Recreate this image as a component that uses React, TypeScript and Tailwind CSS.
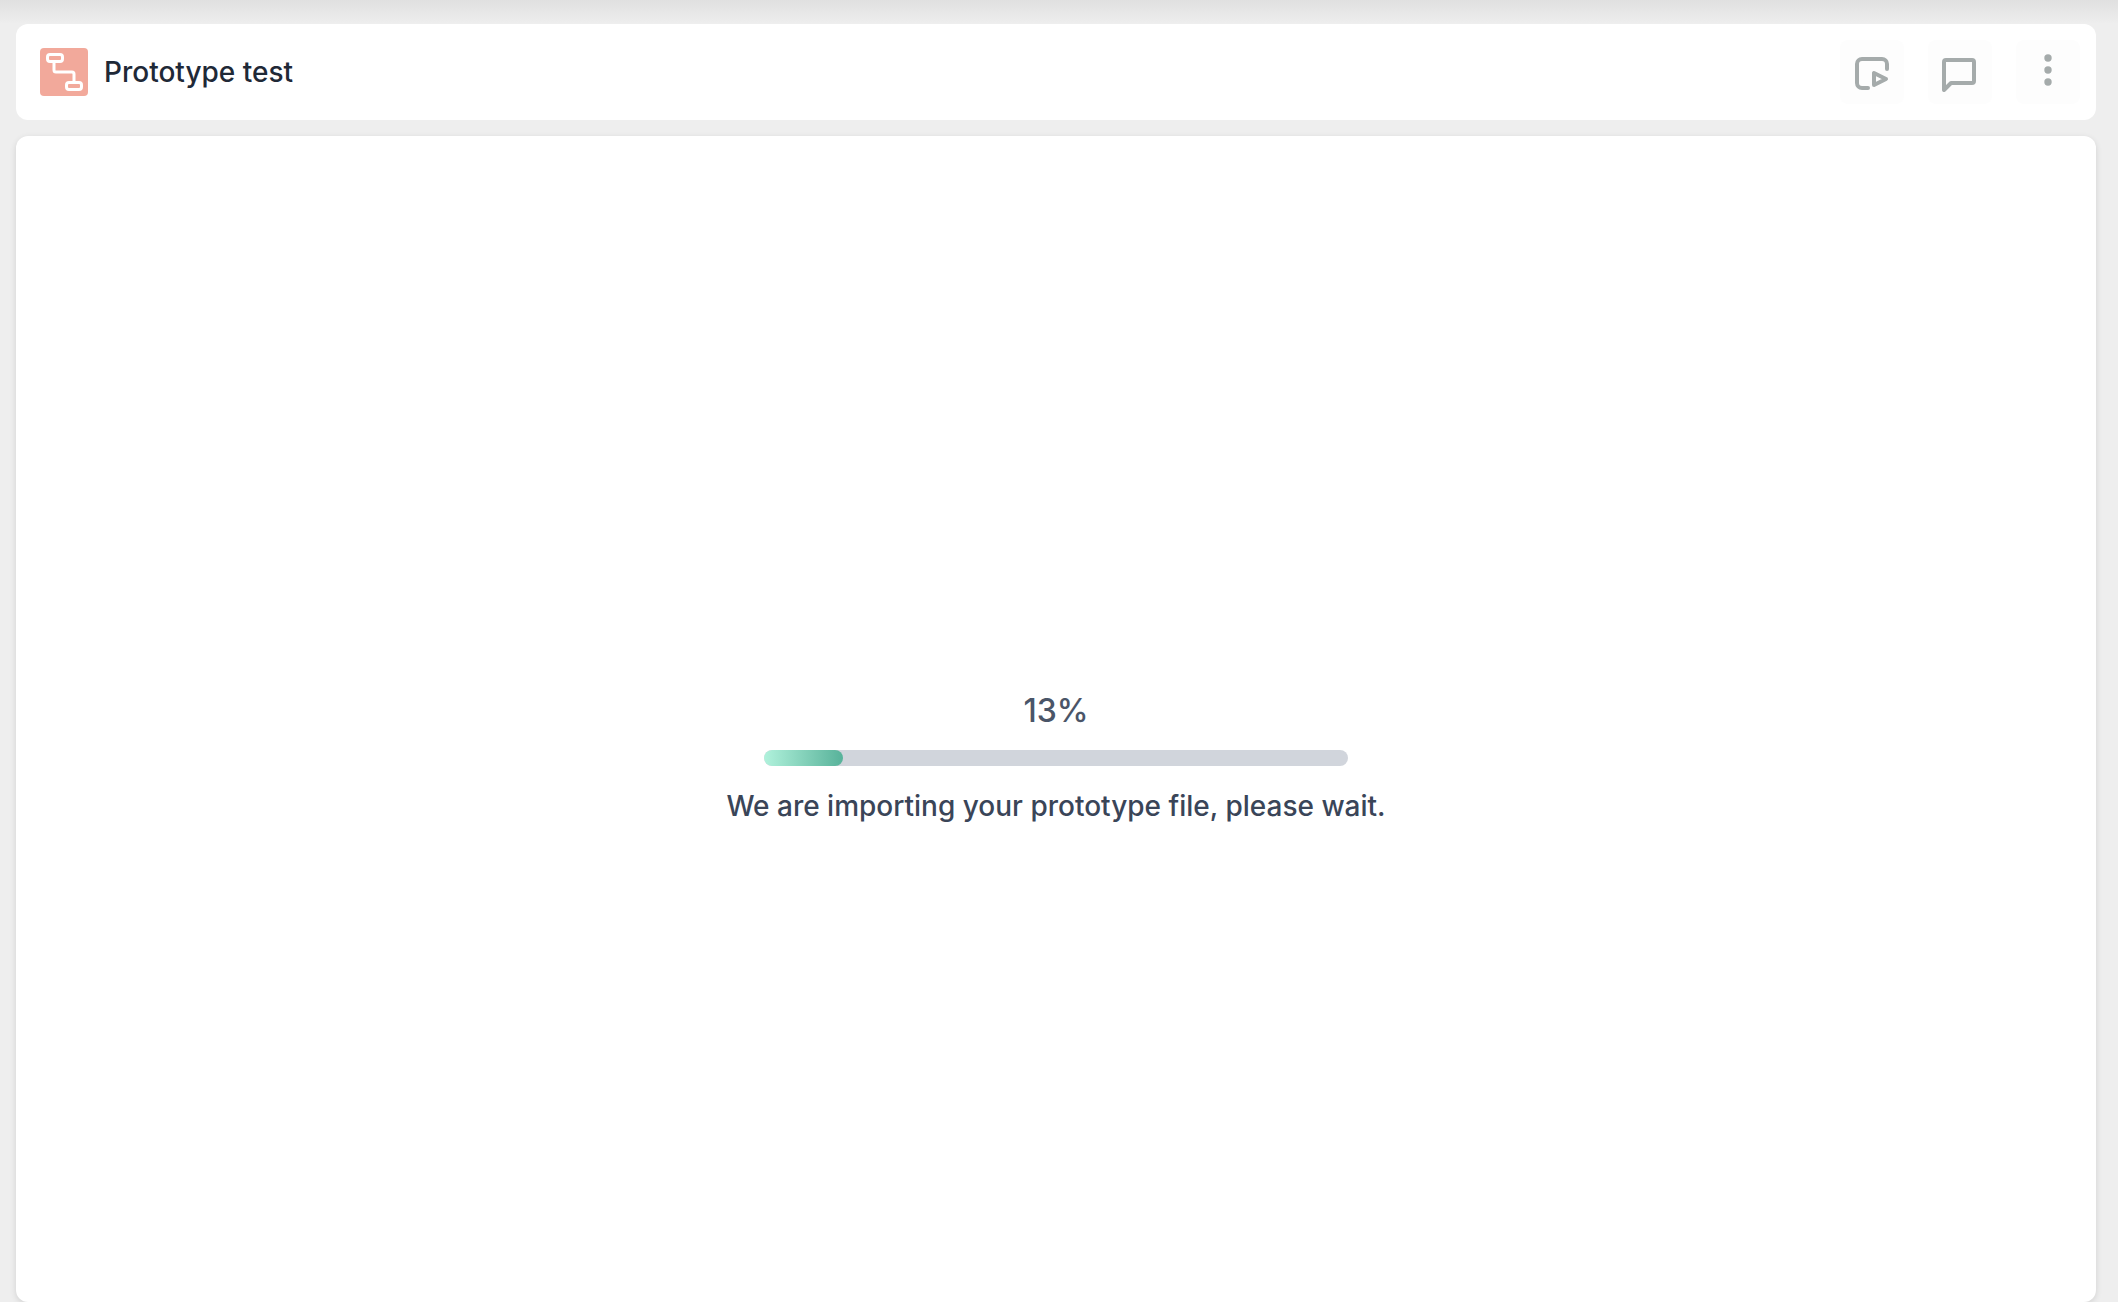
import React from 'react';

const PROGRESS = 13;

// flow diagram glyph on the salmon tile
function FlowIcon() {
  return (
    <svg width="48" height="48" viewBox="0 0 48 48" fill="none" stroke="#fff" strokeWidth="3">
      <rect x="7.5" y="6.5" width="15" height="7" rx="2.5" />
      <rect x="26.5" y="34.5" width="15" height="7" rx="2.5" />
      <path d="M14 14v8a2 2 0 0 0 2 2h16a2 2 0 0 1 2 2v8" strokeLinecap="round" />
    </svg>
  );
}

function PlayIcon() {
  return (
    <svg width="36" height="36" viewBox="0 0 36 36" fill="none" stroke="#a5abab" strokeWidth="4" strokeLinecap="round" strokeLinejoin="round">
      <path d="M14 34H8a5 5 0 0 1-5-5V10a5 5 0 0 1 5-5h20a5 5 0 0 1 5 5v5" />
      <path d="M20 19v12l12-6z" />
    </svg>
  );
}

function CommentIcon() {
  return (
    <svg width="36" height="40" viewBox="0 0 36 40" fill="none" stroke="#a5abab" strokeWidth="4" strokeLinejoin="round">
      <path d="M2 38V10a2 2 0 0 1 2-2h26a2 2 0 0 1 2 2v19a2 2 0 0 1-2 2H9z" />
    </svg>
  );
}

function DotsIcon() {
  return (
    <svg width="8" height="36" viewBox="0 0 8 36" fill="#a5abab">
      <circle cx="4" cy="4" r="3.7" />
      <circle cx="4" cy="16" r="3.7" />
      <circle cx="4" cy="28" r="3.7" />
    </svg>
  );
}

function IconButton({ children }: { children: React.ReactNode }) {
  return (
    <button className="flex h-16 w-16 items-center justify-center rounded-lg bg-[#fdfdfd]">
      {children}
    </button>
  );
}

export default function App() {
  return (
    <div className="h-[1302px] overflow-hidden bg-[#eeeeee] font-['Inter',sans-serif]">
      <div className="h-6 bg-gradient-to-b from-[#e0e0e0] to-[#eeeeee]" />
      <div className="flex flex-col gap-4 pl-4 pr-[22px]">
        {/* header bar */}
        <header className="flex h-24 items-center justify-between rounded-xl bg-white pl-6 pr-4">
          <div className="flex items-center gap-4">
            <div className="h-12 w-12 rounded-[4px] bg-[#f2a99b]">
              <FlowIcon />
            </div>
            <h1 className="text-[28px] font-medium text-[#1f2937]">Prototype test</h1>
          </div>
          <div className="flex gap-6">
            <IconButton><PlayIcon /></IconButton>
            <IconButton><CommentIcon /></IconButton>
            <IconButton><DotsIcon /></IconButton>
          </div>
        </header>

        {/* import progress */}
        <main className="flex h-[1166px] flex-col items-center rounded-xl bg-white pt-[555px] shadow-[0_2px_6px_rgba(0,0,0,0.12)]">
          <div className="text-[32px] leading-10 font-medium text-[#4a5568]">{PROGRESS}%</div>
          <div className="mt-[19px] h-4 w-[584px] overflow-hidden rounded-lg bg-[#d1d5dc]">
            <div
              className="h-full rounded-lg bg-gradient-to-r from-[#b0f2dc] to-[#57b29a]"
              style={{ width: `${PROGRESS + 0.5}%` }}
            />
          </div>
          <p className="mt-5 text-[28px] leading-10 font-medium text-[#3a4558]">
            We are importing your prototype file, please wait.
          </p>
        </main>
      </div>
    </div>
  );
}
